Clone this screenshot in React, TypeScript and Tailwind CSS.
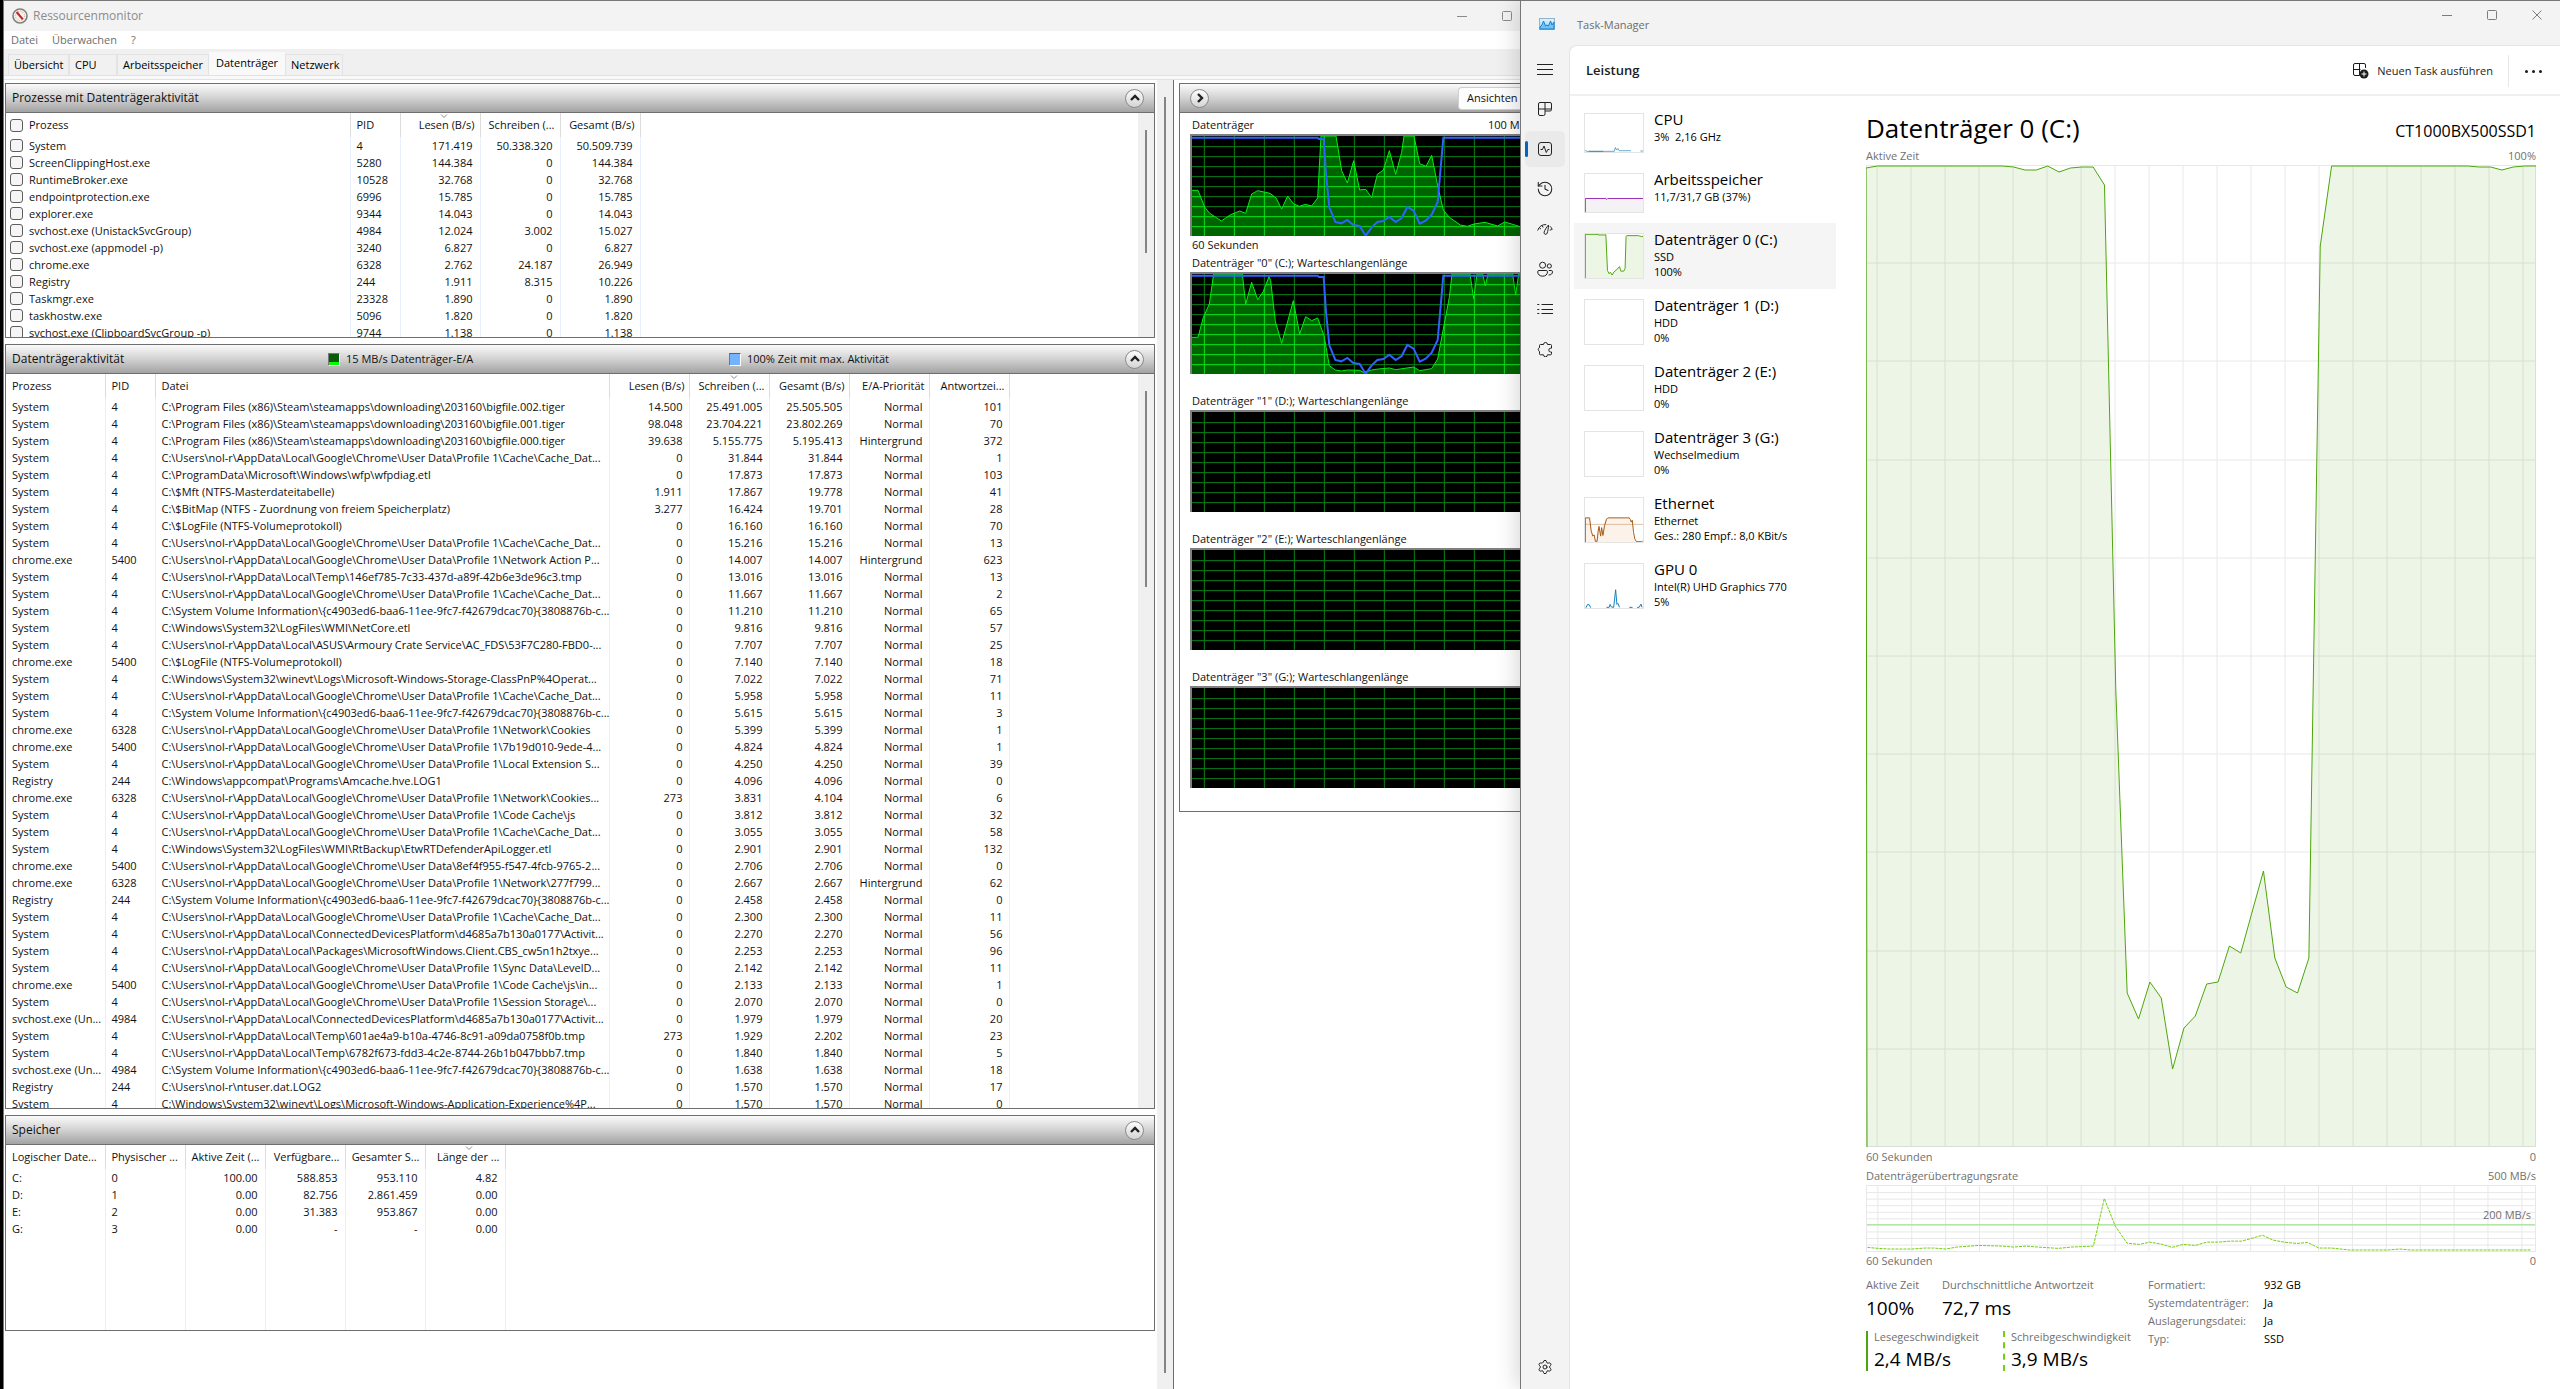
import React from "react";
import { History, Settings } from "lucide-react";

/* ---------- data ---------- */

type ProcessRow = [string, string, string, string, string];

const processes: ProcessRow[] = [
  ["System", "4", "171.419", "50.338.320", "50.509.739"],
  ["ScreenClippingHost.exe", "5280", "144.384", "0", "144.384"],
  ["RuntimeBroker.exe", "10528", "32.768", "0", "32.768"],
  ["endpointprotection.exe", "6996", "15.785", "0", "15.785"],
  ["explorer.exe", "9344", "14.043", "0", "14.043"],
  ["svchost.exe (UnistackSvcGroup)", "4984", "12.024", "3.002", "15.027"],
  ["svchost.exe (appmodel -p)", "3240", "6.827", "0", "6.827"],
  ["chrome.exe", "6328", "2.762", "24.187", "26.949"],
  ["Registry", "244", "1.911", "8.315", "10.226"],
  ["Taskmgr.exe", "23328", "1.890", "0", "1.890"],
  ["taskhostw.exe", "5096", "1.820", "0", "1.820"],
  ["svchost.exe (ClipboardSvcGroup -p)", "9744", "1.138", "0", "1.138"],
];

const CHROME = "C:\\Users\\nol-r\\AppData\\Local\\Google\\Chrome\\User Data\\";
const LOCAL = "C:\\Users\\nol-r\\AppData\\Local\\";
const STEAM = "C:\\Program Files (x86)\\Steam\\steamapps\\downloading\\203160\\";
const SVI = "C:\\System Volume Information\\{c4903ed6-baa6-11ee-9fc7-f42679dcac70}{3808876b-c...";
const N = "Normal";
const H = "Hintergrund";

const activity: string[][] = [
  ["System", "4", STEAM + "bigfile.002.tiger", "14.500", "25.491.005", "25.505.505", N, "101"],
  ["System", "4", STEAM + "bigfile.001.tiger", "98.048", "23.704.221", "23.802.269", N, "70"],
  ["System", "4", STEAM + "bigfile.000.tiger", "39.638", "5.155.775", "5.195.413", H, "372"],
  ["System", "4", CHROME + "Profile 1\\Cache\\Cache_Dat...", "0", "31.844", "31.844", N, "1"],
  ["System", "4", "C:\\ProgramData\\Microsoft\\Windows\\wfp\\wfpdiag.etl", "0", "17.873", "17.873", N, "103"],
  ["System", "4", "C:\\$Mft (NTFS-Masterdateitabelle)", "1.911", "17.867", "19.778", N, "41"],
  ["System", "4", "C:\\$BitMap (NTFS - Zuordnung von freiem Speicherplatz)", "3.277", "16.424", "19.701", N, "28"],
  ["System", "4", "C:\\$LogFile (NTFS-Volumeprotokoll)", "0", "16.160", "16.160", N, "70"],
  ["System", "4", CHROME + "Profile 1\\Cache\\Cache_Dat...", "0", "15.216", "15.216", N, "13"],
  ["chrome.exe", "5400", CHROME + "Profile 1\\Network Action P...", "0", "14.007", "14.007", H, "623"],
  ["System", "4", LOCAL + "Temp\\146ef785-7c33-437d-a89f-42b6e3de96c3.tmp", "0", "13.016", "13.016", N, "13"],
  ["System", "4", CHROME + "Profile 1\\Cache\\Cache_Dat...", "0", "11.667", "11.667", N, "2"],
  ["System", "4", SVI, "0", "11.210", "11.210", N, "65"],
  ["System", "4", "C:\\Windows\\System32\\LogFiles\\WMI\\NetCore.etl", "0", "9.816", "9.816", N, "57"],
  ["System", "4", LOCAL + "ASUS\\Armoury Crate Service\\AC_FDS\\53F7C280-FBD0-...", "0", "7.707", "7.707", N, "25"],
  ["chrome.exe", "5400", "C:\\$LogFile (NTFS-Volumeprotokoll)", "0", "7.140", "7.140", N, "18"],
  ["System", "4", "C:\\Windows\\System32\\winevt\\Logs\\Microsoft-Windows-Storage-ClassPnP%4Operat...", "0", "7.022", "7.022", N, "71"],
  ["System", "4", CHROME + "Profile 1\\Cache\\Cache_Dat...", "0", "5.958", "5.958", N, "11"],
  ["System", "4", SVI, "0", "5.615", "5.615", N, "3"],
  ["chrome.exe", "6328", CHROME + "Profile 1\\Network\\Cookies", "0", "5.399", "5.399", N, "1"],
  ["chrome.exe", "5400", CHROME + "Profile 1\\7b19d010-9ede-4...", "0", "4.824", "4.824", N, "1"],
  ["System", "4", CHROME + "Profile 1\\Local Extension S...", "0", "4.250", "4.250", N, "39"],
  ["Registry", "244", "C:\\Windows\\appcompat\\Programs\\Amcache.hve.LOG1", "0", "4.096", "4.096", N, "0"],
  ["chrome.exe", "6328", CHROME + "Profile 1\\Network\\Cookies...", "273", "3.831", "4.104", N, "6"],
  ["System", "4", CHROME + "Profile 1\\Code Cache\\js", "0", "3.812", "3.812", N, "32"],
  ["System", "4", CHROME + "Profile 1\\Cache\\Cache_Dat...", "0", "3.055", "3.055", N, "58"],
  ["System", "4", "C:\\Windows\\System32\\LogFiles\\WMI\\RtBackup\\EtwRTDefenderApiLogger.etl", "0", "2.901", "2.901", N, "132"],
  ["chrome.exe", "5400", CHROME + "8ef4f955-f547-4fcb-9765-2...", "0", "2.706", "2.706", N, "0"],
  ["chrome.exe", "6328", CHROME + "Profile 1\\Network\\277f799...", "0", "2.667", "2.667", H, "62"],
  ["Registry", "244", SVI, "0", "2.458", "2.458", N, "0"],
  ["System", "4", CHROME + "Profile 1\\Cache\\Cache_Dat...", "0", "2.300", "2.300", N, "11"],
  ["System", "4", LOCAL + "ConnectedDevicesPlatform\\d4685a7b130a0177\\Activit...", "0", "2.270", "2.270", N, "56"],
  ["System", "4", LOCAL + "Packages\\MicrosoftWindows.Client.CBS_cw5n1h2txye...", "0", "2.253", "2.253", N, "96"],
  ["System", "4", CHROME + "Profile 1\\Sync Data\\LevelD...", "0", "2.142", "2.142", N, "11"],
  ["chrome.exe", "5400", CHROME + "Profile 1\\Code Cache\\js\\in...", "0", "2.133", "2.133", N, "1"],
  ["System", "4", CHROME + "Profile 1\\Session Storage\\...", "0", "2.070", "2.070", N, "0"],
  ["svchost.exe (Un...", "4984", LOCAL + "ConnectedDevicesPlatform\\d4685a7b130a0177\\Activit...", "0", "1.979", "1.979", N, "20"],
  ["System", "4", LOCAL + "Temp\\601ae4a9-b10a-4746-8c91-a09da0758f0b.tmp", "273", "1.929", "2.202", N, "23"],
  ["System", "4", LOCAL + "Temp\\6782f673-fdd3-4c2e-8744-26b1b047bbb7.tmp", "0", "1.840", "1.840", N, "5"],
  ["svchost.exe (Un...", "4984", SVI, "0", "1.638", "1.638", N, "18"],
  ["Registry", "244", "C:\\Users\\nol-r\\ntuser.dat.LOG2", "0", "1.570", "1.570", N, "17"],
  ["System", "4", "C:\\Windows\\System32\\winevt\\Logs\\Microsoft-Windows-Application-Experience%4P...", "0", "1.570", "1.570", N, "0"],
];

const storage: string[][] = [
  ["C:", "0", "100.00", "588.853", "953.110", "4.82"],
  ["D:", "1", "0.00", "82.756", "2.861.459", "0.00"],
  ["E:", "2", "0.00", "31.383", "953.867", "0.00"],
  ["G:", "3", "0.00", "-", "-", "0.00"],
];

/* ---------- resource monitor ---------- */

const FONT = "font-['Open_Sans','Noto_Sans',sans-serif]";

function RoundButton({ label, d }: { label: string; d: string }) {
  return (
    <button
      type="button"
      aria-label={label}
      className="flex size-[19px] shrink-0 items-center justify-center rounded-full border border-[#8a8a8a] bg-linear-to-b from-[#fdfdfd] to-[#d4d4d4]"
    >
      <svg viewBox="0 0 12 12" className="size-3" fill="none" stroke="#222" strokeWidth="2.4">
        <path d={d} />
      </svg>
    </button>
  );
}

type Col = { label: string; width: string; right?: boolean; sort?: boolean };

const processCols: Col[] = [
  { label: "Prozess", width: "w-[344px]" },
  { label: "PID", width: "w-[50px]" },
  { label: "Lesen (B/s)", width: "w-[80px]", right: true, sort: true },
  { label: "Schreiben (...", width: "w-[80px]", right: true },
  { label: "Gesamt (B/s)", width: "w-[80px]", right: true },
];

const activityCols: Col[] = [
  { label: "Prozess", width: "w-[99px]" },
  { label: "PID", width: "w-[50px]" },
  { label: "Datei", width: "w-[453px]" },
  { label: "Lesen (B/s)", width: "w-[80px]", right: true },
  { label: "Schreiben (...", width: "w-[80px]", right: true, sort: true },
  { label: "Gesamt (B/s)", width: "w-[80px]", right: true },
  { label: "E/A-Priorität", width: "w-[80px]", right: true },
  { label: "Antwortzei...", width: "w-[80px]", right: true },
];

const storageCols: Col[] = [
  { label: "Logischer Date...", width: "w-[99px]" },
  { label: "Physischer ...", width: "w-[80px]" },
  { label: "Aktive Zeit (...", width: "w-[80px]", right: true },
  { label: "Verfügbare...", width: "w-[80px]", right: true },
  { label: "Gesamter S...", width: "w-[80px]", right: true },
  { label: "Länge der ...", width: "w-[80px]", right: true, sort: true },
];

function DataTable({ cols, rows, checks, filler }: { cols: Col[]; rows: string[][]; checks?: boolean; filler?: boolean }) {
  return (
    <table className="table-fixed border-collapse text-[11px] text-[#111]">
      <thead>
        <tr className="h-6">
          {cols.map((c, i) => (
            <th
              key={c.label}
              scope="col"
              className={`relative ${c.width} border-r border-[#dcdcdc] py-0 font-normal whitespace-nowrap ${c.right ? "pr-[5px] text-right" : "pl-[6px] text-left"}`}
            >
              {c.sort && (
                <svg viewBox="0 0 8 5" className="absolute top-px left-1/2 h-[5px] w-2" fill="none" stroke="#888">
                  <path d="M1 .5l3 3 3-3" />
                </svg>
              )}
              {checks && i === 0 ? (
                <label className="flex items-center gap-[6px]">
                  <Check />
                  {c.label}
                </label>
              ) : (
                c.label
              )}
            </th>
          ))}
        </tr>
      </thead>
      <tbody>
        {rows.map((r, ri) => (
          <tr key={ri} className="h-[17px]">
            {r.map((v, ci) => (
              <td
                key={ci}
                className={`border-r border-[#e6f0ff] py-0 leading-[17px] whitespace-nowrap ${cols[ci].right ? "pr-[7px] text-right" : "pl-[6px]"}`}
              >
                {checks && ci === 0 ? (
                  <label className="flex items-center gap-[6px]">
                    <Check />
                    {v}
                  </label>
                ) : (
                  v
                )}
              </td>
            ))}
          </tr>
        ))}
        {filler && (
          <tr className="h-24">
            {cols.map((c) => (
              <td key={c.label} className="border-r border-[#e6f0ff]" />
            ))}
          </tr>
        )}
      </tbody>
    </table>
  );
}

function Check() {
  return (
    <input
      type="checkbox"
      className="-ml-[2px] size-[13px] shrink-0 appearance-none rounded-[3px] border border-[#5c5c5c] bg-[#f5f5f5]"
    />
  );
}

function Section({
  title,
  legend,
  height,
  thumb,
  children,
}: {
  title: string;
  legend?: React.ReactNode;
  height: string;
  thumb?: string;
  children: React.ReactNode;
}) {
  return (
    <section className="border border-[#6e6e6e] bg-white">
      <header className="flex h-[29px] items-center border-b border-[#6e6e6e] bg-linear-to-b from-[#fbfbfb] via-[#d2d2d2] to-[#a3a3a3] pr-[10px] pl-[6px]">
        <h2 className="w-[316px] shrink-0 text-[12px] whitespace-nowrap text-[#111]">{title}</h2>
        <div className="flex min-w-0 flex-1">{legend}</div>
        <RoundButton label={`${title} einklappen`} d="M2 8l4-4 4 4" />
      </header>
      <div className={`flex overflow-hidden ${height}`}>
        <div className="min-w-0 flex-1 overflow-hidden">{children}</div>
        {thumb && (
          <div className="w-4 shrink-0 bg-[#f0f0f0] pt-[17px] pl-[7px]">
            <div className={`w-[2px] bg-[#858585] ${thumb}`} />
          </div>
        )}
      </div>
    </section>
  );
}

const blueLine =
  "0,5 377,5 381,9 395,9 402,114 412,214 430,258 448,262 466,252 484,267 503,270 521,299 539,274 556,258 574,255 592,242 611,258 629,246 646,213 665,224 683,263 701,254 719,236 737,198 754,5 984,5";
const ioLine =
  "0,163 18,163 38,213 52,231 88,255 116,236 143,225 161,232 179,174 197,164 234,172 252,186 269,219 287,180 304,203 322,211 340,205 359,210 377,186 387,0 432,0 449,104 466,141 485,74 503,162 521,160 539,185 556,115 574,102 592,44 611,115 629,49 636,0 666,0 683,83 702,91 719,58 737,149 754,222 772,244 805,267 826,271 846,264 879,259 917,270 938,258 959,264 984,272";
const queueLine =
  "0,190 18,190 34,130 52,90 65,0 151,0 161,90 179,25 197,77 214,52 231,8 236,20 250,142 269,208 304,80 323,180 341,128 359,140 377,132 396,185 412,275 430,288 448,291 466,288 503,289 514,295 539,288 559,285 592,282 611,287 665,279 683,290 719,284 737,255 754,165 772,70 780,0 834,0 845,74 855,0 872,0 880,36 888,0 962,0 971,62 980,0 984,0";

const gridPath =
  Array.from({ length: 9 }, (_, i) => `M0 ${(i + 1) * 30 + 2}H984`).join("") +
  Array.from({ length: 11 }, (_, i) => `M${37 + i * 90} 0V300`).join("");

function MonitorGraph({ id, area, blue }: { id: string; area?: string; blue?: string }) {
  return (
    <div className="border-t-2 border-l-2 border-[#808080]">
      <svg viewBox="0 0 984 300" preserveAspectRatio="none" className="block h-[100px] w-full bg-black">
        <path d={gridPath} stroke="#0a8218" strokeWidth="3" fill="none" />
        {area && (
          <>
            <clipPath id={id}>
              <polygon points={`0,300 ${area} 984,300`} />
            </clipPath>
            <g clipPath={`url(#${id})`}>
              <rect width="984" height="300" fill="#006400" />
              <path d={gridPath} stroke="#08e41c" strokeWidth="3" fill="none" />
            </g>
            <polyline points={area} fill="none" stroke="#00f010" strokeWidth="3" />
          </>
        )}
        {blue && <polyline points={blue} fill="none" stroke="#2f63ff" strokeWidth="6" />}
      </svg>
    </div>
  );
}

function Tab({ children, active, width }: { children: string; active?: boolean; width: string }) {
  return (
    <button
      type="button"
      role="tab"
      aria-selected={!!active}
      className={
        active
          ? `${width} h-[23px] bg-[#f9f9f9] px-[7px] text-left whitespace-nowrap`
          : `${width} h-[21px] border border-b-0 border-[#e3e3e3] bg-[#f1f1f1] px-[5px] pt-px text-left whitespace-nowrap`
      }
    >
      {children}
    </button>
  );
}

function ResourceMonitor() {
  return (
    <div className="flex min-w-0 flex-[1517] overflow-hidden border-l-[3px] border-black">
      <div className="flex min-w-0 flex-1 flex-col border-t border-l border-[#777] bg-white">
        <div className="flex h-[30px] shrink-0 items-center bg-[#f3f3f3] pl-2 text-[12px] text-[#8c8c8c]">
          <svg viewBox="0 0 16 16" className="mr-[5px] size-4">
            <circle cx="8" cy="8" r="7" fill="#f4f0ea" stroke="#857f7a" strokeWidth="1.6" />
            <circle cx="8" cy="8" r="4.6" fill="none" stroke="#b7b0a8" strokeDasharray="1 1.4" />
            <path d="M4.6 4l6.2 7.4" stroke="#cc1f1f" strokeWidth="2" />
          </svg>
          <span className="flex-1">Ressourcenmonitor</span>
          <button type="button" aria-label="Minimieren" className="mr-[35px]">
            <svg viewBox="0 0 10 10" className="size-[10px]" stroke="#8a8a8a">
              <path d="M0 5.5h10" />
            </svg>
          </button>
          <button type="button" aria-label="Maximieren" className="mr-2">
            <svg viewBox="0 0 10 10" className="size-[10px]" stroke="#8a8a8a" fill="none">
              <rect x=".5" y=".5" width="9" height="9" rx="1" />
            </svg>
          </button>
        </div>
        <nav className="flex h-[18px] shrink-0 items-center gap-[14px] pl-[7px] text-[11px] text-[#6d6d6d]">
          <button type="button">Datei</button>
          <button type="button">Überwachen</button>
          <button type="button">?</button>
        </nav>
        <div role="tablist" className="flex h-[27px] shrink-0 items-end border-b border-[#e2e2e2] bg-[#f0f0f0] pl-1 text-[11px] text-black">
          <Tab width="w-[61px]">Übersicht</Tab>
          <Tab width="w-[48px]">CPU</Tab>
          <Tab width="w-[92px]">Arbeitsspeicher</Tab>
          <Tab width="w-[76px]" active>
            Datenträger
          </Tab>
          <Tab width="w-[58px]">Netzwerk</Tab>
        </div>
        <div className="h-1 shrink-0 border-b border-[#e2e2e2] bg-[#f9f9f9]" />
        <div className="flex min-h-0 flex-1">
          <div className="flex min-w-0 flex-1 flex-col gap-[6px] overflow-hidden pt-[3px] pr-[2px] pl-px">
            <Section title="Prozesse mit Datenträgeraktivität" height="h-[224px]" thumb="h-[123px]">
              <DataTable cols={processCols} rows={processes} checks />
            </Section>
            <Section
              title="Datenträgeraktivität"
              height="h-[734px]"
              thumb="h-[196px]"
              legend={
                <>
                  <span className="flex w-[401px] shrink-0 items-center gap-[6px] text-[11px] text-[#111]">
                    <span className="h-[13px] w-3 border border-t-[#777] border-r-white border-b-white border-l-[#777] bg-linear-to-b from-[#075c07] from-70% to-[#00ff00] to-70%" />
                    15 MB/s Datenträger-E/A
                  </span>
                  <span className="flex items-center gap-[6px] text-[11px] text-[#111]">
                    <span className="h-[13px] w-3 border border-t-[#3c68a8] border-r-white border-b-white border-l-[#777] bg-[#74b3ff]" />
                    100% Zeit mit max. Aktivität
                  </span>
                </>
              }
            >
              <DataTable cols={activityCols} rows={activity} />
            </Section>
            <Section title="Speicher" height="h-[185px]">
              <DataTable cols={storageCols} rows={storage} filler />
            </Section>
          </div>
          <div className="w-4 shrink-0 bg-[#f0f0f0] pt-[17px] pb-4 pl-[7px]">
            <div className="h-full w-[2px] bg-[#858585]" />
          </div>
          <div className="w-[347px] shrink-0 border-l border-[#6e6e6e] pt-[3px] pl-[5px]">
            <section className="h-[729px] border border-r-0 border-[#6e6e6e] text-[12px] text-[#111]">
              <header className="flex h-[29px] items-center justify-between border-b border-[#6e6e6e] bg-linear-to-b from-[#fbfbfb] via-[#d2d2d2] to-[#a3a3a3] pl-[10px]">
                <RoundButton label="Diagramme ausblenden" d="M4 2l4 4-4 4" />
                <button type="button" className="h-[23px] w-[62px] overflow-hidden rounded-l-[4px] border border-r-0 border-[#d0d0d0] bg-[#fdfdfd] pl-2 text-left text-[11px] whitespace-nowrap">
                  Ansichten
                </button>
              </header>
              <div className="pt-[3px] pl-[10px] text-[11px] leading-[18px]">
                <div className="flex justify-between pl-[2px]">
                  <span>Datenträger</span>
                  <span className="w-8 overflow-hidden whitespace-nowrap">100 MB/s</span>
                </div>
                <MonitorGraph id="io" area={ioLine} blue={blueLine} />
                <div className="pl-[2px] whitespace-nowrap">
                  <div>60 Sekunden</div>
                  <div>Datenträger "0" (C:); Warteschlangenlänge</div>
                </div>
                <MonitorGraph id="queue" area={queueLine} blue={blueLine} />
                {['"1" (D:)', '"2" (E:)', '"3" (G:)'].map((d) => (
                  <div key={d}>
                    <div className="pt-[18px] pl-[2px] whitespace-nowrap">Datenträger {d}; Warteschlangenlänge</div>
                    <MonitorGraph id={d} />
                  </div>
                ))}
              </div>
            </section>
          </div>
        </div>
      </div>
    </div>
  );
}

/* ---------- task manager ---------- */

const navItems: { label: string; icon: React.ReactNode; active?: boolean }[] = [
  { label: "Menü", icon: <path d="M0 3.5h16M0 8.5h16M0 13.5h16" /> },
  {
    label: "Prozesse",
    icon: <path d="M3 1.5h10A1.5 1.5 0 0 1 14.500 3v5.500A1.500 1.500 0 0 1 13 10H8v3a1.500 1.500 0 0 1-1.500 1.500H3A1.500 1.500 0 0 1 1.500 13V3A1.500 1.500 0 0 1 3 1.500zM8 1.500V10M1.500 8h13" />,
  },
  {
    label: "Leistung",
    active: true,
    icon: (
      <>
        <rect x="1.5" y="1.5" width="13" height="13" rx="2.5" />
        <path d="M3.5 8.5h2L7 5l2.300 6.500 1.500-3h1.700" />
      </>
    ),
  },
  { label: "App-Verlauf", icon: null },
  {
    label: "Autostart von Apps",
    icon: <path d="M.7 9.500a8 8 0 0 1 8.500-5.900M12.900 5.200a8 8 0 0 1 2.400 3.300M2.200 6.500L4 8.200M11.500 4c-2 2.300-4 5.500-4.400 7.200a1.600 1.600 0 0 0 3.100.9c.6-1.700 1.300-5.200 1.300-8.100zM5 4.500l1.200 2M14.800 8.500l-2 .7" />,
  },
  {
    label: "Benutzer",
    icon: (
      <>
        <circle cx="5.6" cy="4.2" r="3" />
        <circle cx="12.3" cy="5" r="2.1" />
        <path d="M2 9.500h7.200a1.300 1.300 0 0 1 1.300 1.300c0 2.700-2 4.400-4.900 4.400S.7 13.500.7 10.800A1.300 1.300 0 0 1 2 9.500zM11.800 9.500h2.400a1.300 1.300 0 0 1 1.300 1.300c0 2-1.500 3.200-3.900 3.200" />
      </>
    ),
  },
  { label: "Details", icon: <path d="M4.500 3.500H16M4.500 8.500H16M4.500 12.500H16M.3 3.500h2M.3 8.500h2M.3 12.500h2" /> },
  {
    label: "Dienste",
    icon: <path d="M3.500 3.500h3a2 2 0 0 1 4 0h3a1 1 0 0 1 1 1v2.700h-.8a1.900 1.900 0 0 0 0 3.800h.8v1.800a1 1 0 0 1-1 1h-3a2 2 0 0 1-4 0h-3a1 1 0 0 1-1-1v-2.500a1.900 1.900 0 0 1 0-3.600V4.500a1 1 0 0 1 1-1z" />,
  },
];

type PerfItem = { name: string; lines: string[]; short?: boolean; active?: boolean; chart?: React.ReactNode };

const perfItems: PerfItem[] = [
  {
    name: "CPU",
    lines: ["3%  2,16 GHz"],
    short: true,
    chart: (
      <path d="M0 113l6 3h84l3-12 4 8 4-5 4 7h36M170 115h8M12 116h44" stroke="#117dbb" fill="none" strokeWidth="2" />
    ),
  },
  {
    name: "Arbeitsspeicher",
    lines: ["11,7/31,7 GB (37%)"],
    short: true,
    chart: (
      <>
        <path d="M0 118V76h178v42z" fill="#f4f2f4" />
        <path d="M1 118V76h63l3 3 3-3h108" stroke="#9528b4" fill="none" strokeWidth="3" />
      </>
    ),
  },
  {
    name: "Datenträger 0 (C:)",
    lines: ["SSD", "100%"],
    active: true,
    chart: (
      <>
        <path d="M1 135V1h36l6 2h18l3-1 5 110 5 10 4-5 5 9 6-10 8-6 9-10 4 14h9l4-8 3-98 2-3h36l10 3 8-2v134z" fill="#edf6e5" />
        <path d="M1 135V1h36l6 2h18l3-1 5 110 5 10 4-5 5 9 6-10 8-6 9-10 4 14h9l4-8 3-98 2-3h36l10 3 8-2" stroke="#4da60c" fill="none" strokeWidth="3" />
      </>
    ),
  },
  { name: "Datenträger 1 (D:)", lines: ["HDD", "0%"] },
  { name: "Datenträger 2 (E:)", lines: ["HDD", "0%"] },
  { name: "Datenträger 3 (G:)", lines: ["Wechselmedium", "0%"] },
  {
    name: "Ethernet",
    lines: ["Ethernet", "Ges.: 280 Empf.: 8,0 KBit/s"],
    chart: (
      <>
        <path d="M1 135V61h13l8 54 12 18 6-48 8 28 6-28 8-18 4-5h68l8 16 6 48 4 8v1z" fill="#fcf2ea" />
        <path d="M0 81h178" stroke="#c9a27c" strokeWidth="2" />
        <path d="M1 135V61h13l5 40 5 16 4-4 4 20h5l3-28 3-18 5 30 3-26 4 24 5-30 6-20 4-4h66l3 5 3 8 3-6 4 38 4 20 5 8h16l3-2" stroke="#a8570f" fill="none" strokeWidth="3" />
      </>
    ),
  },
  {
    name: "GPU 0",
    lines: ["Intel(R) UHD Graphics 770", "5%"],
    chart: (
      <path d="M3 134l5-10 6 2 3 8M66 133h8l3-9 4 8 7 1 6-54 4 45 3-3 5 12M136 133h10M160 133h6l6-10 3 10" stroke="#117dbb" fill="none" strokeWidth="3" />
    ),
  },
];

const activeTime = [
  2, 0, 0, 0, 0, 0, 0, 0, 0, 0, 0, 0, 0, 1, 4, 4, 0, 6, 2, 1, 1, 19, 525, 827, 853, 816, 832, 903, 862, 850, 818, 816,
  780, 787, 746, 705, 792, 821, 827, 792, 80, 0, 0, 0, 0, 0, 0, 0, 0, 0, 0, 0, 0, 0, 1, 1, 4, 1, 0, 0,
];
const activePoints = activeTime.map((y, i) => `${(i * 670) / 59},${y + 1}`).join(" ");
const bigGrid =
  Array.from({ length: 9 }, (_, i) => `M0 ${Math.round((i + 1) * 98.2)}H670`).join("") +
  Array.from({ length: 20 }, (_, i) => `M${11 + i * 34} 0V982`).join("");
const rateGrid =
  Array.from({ length: 9 }, (_, i) => `M0 ${(i + 1) * 20}H1478`).join("") +
  Array.from({ length: 20 }, (_, i) => `M${24 + i * 75} 0V198`).join("");

const ratePoints =
  "1,187 25,190 49,192 99,192 128,189 148,189 174,192 199,186 248,181 298,183 324,186 353,183 378,186 423,190 453,186 501,183 525,38 549,121 575,174 603,178 625,171 651,177 675,187 699,178 727,181 751,171 778,171 803,168 829,168 875,150 899,165 923,171 951,175 975,172 1000,189 1028,189 1068,195 1153,195 1178,192 1203,195 1468,195";

function Stat({ label, value }: { label: string; value: string }) {
  return (
    <div className="whitespace-nowrap">
      <div className="leading-[18px] text-[#707070]">{label}</div>
      <div className="text-[19px] leading-7 text-black">{value}</div>
    </div>
  );
}

function Speed({ label, value, line }: { label: string; value: string; line: string }) {
  return (
    <div className={`h-10 pl-[6px] whitespace-nowrap ${line}`}>
      <div className="leading-3 text-[#707070]">{label}</div>
      <div className="pt-1 text-[19px] leading-6 text-black">{value}</div>
    </div>
  );
}

function DiskDetail() {
  return (
    <div className="ml-[30px] flex min-w-0 flex-1 flex-col pt-[12px] pr-6 pb-[18px] text-[11px] text-[#707070]">
      <div className="flex h-[39px] items-center justify-between text-black">
        <h2 className="text-[26px] leading-9">Datenträger 0 (C:)</h2>
        <span className="pt-[6px] text-[16px]">CT1000BX500SSD1</span>
      </div>
      <div className="flex justify-between leading-[18px]">
        <span>Aktive Zeit</span>
        <span>100%</span>
      </div>
      <svg viewBox="0 0 670 982" preserveAspectRatio="none" className="block min-h-0 w-full flex-1">
        <rect x=".5" y=".5" width="669" height="981" fill="#fff" stroke="#e8e8e8" />
        <path d={bigGrid} stroke="#e8e8e8" fill="none" vectorEffect="non-scaling-stroke" />
        <polygon points={`0,982 ${activePoints} 670,982`} fill="#4da60c" fillOpacity=".1" />
        <polyline points={`1,982 ${activePoints}`} fill="none" stroke="#4da60c" vectorEffect="non-scaling-stroke" />
      </svg>
      <div className="flex justify-between leading-[19px]">
        <span>60 Sekunden</span>
        <span>0</span>
      </div>
      <div className="flex justify-between leading-[19px]">
        <span>Datenträgerübertragungsrate</span>
        <span>500 MB/s</span>
      </div>
      <div className="relative">
        <svg viewBox="0 0 1478 198" preserveAspectRatio="none" className="block h-[67px] w-full border border-[#e8e8e8]">
          <path d={rateGrid} stroke="#e8e8e8" fill="none" vectorEffect="non-scaling-stroke" />
          <path d="M0 118H1478" stroke="#9be08f" vectorEffect="non-scaling-stroke" />
          <polyline points={ratePoints} fill="none" stroke="#74d00e" strokeDasharray="3 1" vectorEffect="non-scaling-stroke" />
        </svg>
        <span className="absolute top-[21px] right-[5px] leading-[18px]">200 MB/s</span>
      </div>
      <div className="flex justify-between leading-[18px]">
        <span>60 Sekunden</span>
        <span>0</span>
      </div>
      <div className="flex pt-[6px]">
        <div className="w-[282px]">
          <div className="grid grid-cols-[76px_1fr]">
            <Stat label="Aktive Zeit" value="100%" />
            <Stat label="Durchschnittliche Antwortzeit" value="72,7 ms" />
          </div>
          <div className="grid grid-cols-[137px_1fr] pt-[9px]">
            <Speed label="Lesegeschwindigkeit" value="2,4 MB/s" line="border-l-2 border-[#4da60c]" />
            <Speed label="Schreibgeschwindigkeit" value="3,9 MB/s" line="border-l-2 border-dashed border-[#74d00e]" />
          </div>
        </div>
        <dl className="grid h-[72px] grid-cols-[116px_auto] leading-[18px] whitespace-nowrap">
          {[
            ["Formatiert:", "932 GB"],
            ["Systemdatenträger:", "Ja"],
            ["Auslagerungsdatei:", "Ja"],
            ["Typ:", "SSD"],
          ].map(([k, v]) => (
            <React.Fragment key={k}>
              <dt>{k}</dt>
              <dd className="text-black">{v}</dd>
            </React.Fragment>
          ))}
        </dl>
      </div>
    </div>
  );
}

function TaskManager() {
  return (
    <div className="z-10 flex min-w-0 flex-[1039] flex-col border-t border-l border-[#777] bg-[#f3f3f3] shadow-[0_0_24px_rgba(0,0,0,0.2)]">
      <div className="flex h-11 shrink-0 items-start pr-[18px] pl-[18px] text-[11px] text-[#6d6d6d]">
        <svg viewBox="0 0 16 12" className="mt-[17px] mr-[22px] h-3 w-4">
          <defs>
            <linearGradient id="tm" x2="0" y2="1">
              <stop offset="0" stopColor="#e3f2fb" />
              <stop offset="1" stopColor="#8fd4fa" />
            </linearGradient>
          </defs>
          <rect x=".5" y=".5" width="15" height="11" fill="url(#tm)" stroke="#8fb4cc" />
          <path d="M1 9l2-2 1.500-4 2 5 1.500-1 1.500 1 2-5 1.500 4L15 4v7H1z" fill="#4db5f0" fillOpacity=".6" stroke="#1a7fd0" />
        </svg>
        <span className="mt-[15px] flex-1 leading-[18px]">Task-Manager</span>
        <div className="mt-[9px] flex gap-[35px]">
          {[
            ["Minimieren", "M0 5.500h10"],
            ["Maximieren", "M1.500.5h7a1 1 0 0 1 1 1v7a1 1 0 0 1-1 1h-7a1 1 0 0 1-1-1v-7a1 1 0 0 1 1-1z"],
            ["Schließen", "M.5.5l9 9M9.500.5l-9 9"],
          ].map(([l, d]) => (
            <button key={l} type="button" aria-label={l}>
              <svg viewBox="0 0 10 10" className="block size-[10px]" fill="none" stroke="#7c7c7c">
                <path d={d} />
              </svg>
            </button>
          ))}
        </div>
      </div>
      <div className="flex min-h-0 flex-1">
        <nav className="flex w-12 shrink-0 flex-col items-center justify-between pt-[6px] pb-1">
          <ul className="space-y-1">
            {navItems.map((n) => (
              <li key={n.label}>
                <button
                  type="button"
                  aria-label={n.label}
                  className={
                    n.active
                      ? "relative flex h-9 w-10 items-center justify-center rounded-[5px] bg-[#eaeaea]"
                      : "flex h-9 w-10 items-center justify-center"
                  }
                >
                  {n.active && <span className="absolute top-[10px] left-0 h-4 w-[3px] rounded-full bg-[#0067c0]" />}
                  {n.icon ? (
                    <svg viewBox="0 0 16 16" className="size-4" fill="none" stroke="#222" strokeWidth="1">
                      {n.icon}
                    </svg>
                  ) : (
                    <History size={18} strokeWidth={1.4} color="#222" />
                  )}
                </button>
              </li>
            ))}
          </ul>
          <button type="button" aria-label="Einstellungen" className="flex h-9 w-10 items-center justify-center">
            <Settings size={16} strokeWidth={1.5} color="#222" />
          </button>
        </nav>
        <main className="flex min-w-0 flex-1 flex-col rounded-tl-lg border-t border-l border-[#e5e5e5] bg-white">
          <header className="flex h-[50px] shrink-0 items-center border-b-2 border-[#f0f0f0] pt-[2px] pr-[18px] pl-4">
            <h1 className="flex-1 text-[13px] font-semibold text-[#1b1b1b]">Leistung</h1>
            <button type="button" className="flex items-center gap-2 pr-[15px] text-[11px] text-[#1b1b1b]">
              <svg viewBox="0 0 16 16" className="size-4" fill="none" stroke="#1b1b1b">
                <path d="M6.500 12.500H2A1.500 1.500 0 0 1 .5 11V2A1.500 1.500 0 0 1 2 .5h9A1.500 1.500 0 0 1 12.500 2v3M6.500.5v12M.5 6.500h7" />
                <circle cx="11" cy="11" r="4.5" fill="#1b1b1b" stroke="none" />
                <path d="M8.500 11h5M11 8.500v5" stroke="#fff" />
              </svg>
              Neuen Task ausführen
            </button>
            <button type="button" aria-label="Weitere Optionen" className="flex h-8 items-center gap-1 border-l border-[#e8e8e8] pl-4">
              <span className="size-[3px] rounded-full bg-[#1b1b1b]" />
              <span className="size-[3px] rounded-full bg-[#1b1b1b]" />
              <span className="size-[3px] rounded-full bg-[#1b1b1b]" />
            </button>
          </header>
          <div className="flex min-h-0 flex-1">
            <ul className="w-[266px] shrink-0 pt-[7px] pl-1">
              {perfItems.map((p) => (
                <li key={p.name}>
                  <button
                    type="button"
                    className={`flex w-full gap-[10px] pt-[6px] pl-[10px] text-left text-black ${p.short ? "h-[60px]" : "h-[66px]"} ${p.active ? "bg-[#f5f5f5]" : "bg-white"}`}
                  >
                    <svg
                      viewBox={p.short ? "0 0 178 118" : "0 0 178 135"}
                      preserveAspectRatio="none"
                      className={`mt-1 w-[60px] shrink-0 border border-[#e4e4e4] bg-white ${p.short ? "h-10" : "h-[46px]"}`}
                    >
                      {p.chart}
                    </svg>
                    <span className="block min-w-0 whitespace-pre">
                      <span className="block text-[15px] leading-5">{p.name}</span>
                      {p.lines.map((l) => (
                        <span key={l} className="block text-[11px] leading-[15px]">
                          {l}
                        </span>
                      ))}
                    </span>
                  </button>
                </li>
              ))}
            </ul>
            <DiskDetail />
          </div>
        </main>
      </div>
    </div>
  );
}

export default function App() {
  return (
    <div className={`flex h-screen overflow-hidden bg-white ${FONT}`}>
      <ResourceMonitor />
      <TaskManager />
    </div>
  );
}
